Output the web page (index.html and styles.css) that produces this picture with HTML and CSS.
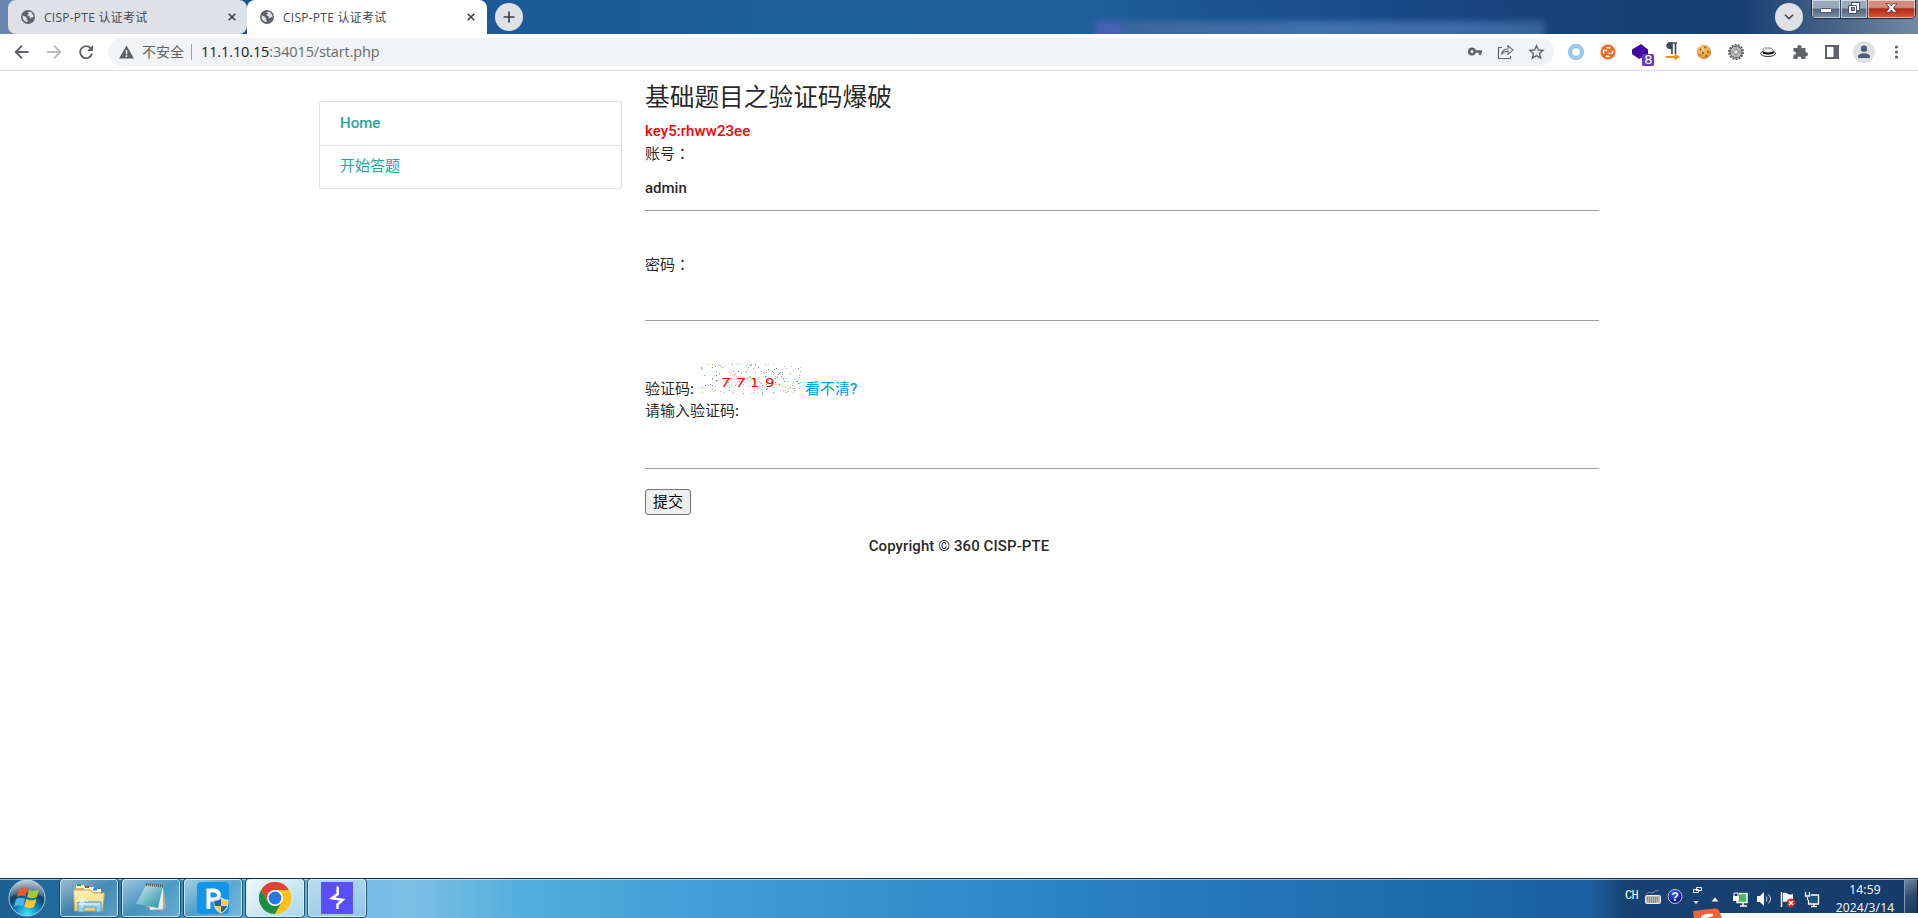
FILE: index.html
```
<!DOCTYPE html>
<html lang="zh-CN">
<head>
<meta charset="utf-8">
<title>CISP-PTE 认证考试</title>
<link rel="stylesheet" href="styles.css">
</head>
<body>
<svg width="0" height="0" class="defs">
  <defs>
    <symbol id="globe" viewBox="0 0 14 14"><circle cx="7" cy="7" r="7" fill="#5f6368"/><path d="M1.6 5.5 4 6.2 6 8l-.4 1.4 1 .8V12C3.600 12 1.600 9.500 1.600 7zM6 2l4-.2 2.300 3.400.2 2.600-1.500-.8-1.500 1.600-1-.6.4-1.500-2.400-1 .4-1.600 1.500-.3z" fill="#dee1e6"/></symbol>
    <symbol id="close" viewBox="0 0 8 8"><path d="M.7.7l6.600 6.600M7.300.7.700 7.300" stroke="#3c4043" stroke-width="1.600" fill="none"/></symbol>
    <radialGradient id="orb" cx=".5" cy=".95" r=".9"><stop offset="0" stop-color="#3fe6ff"/><stop offset=".35" stop-color="#128bc4"/><stop offset=".65" stop-color="#0d3f69"/><stop offset="1" stop-color="#7895aa"/></radialGradient>
    <linearGradient id="shine" x2="0" y2="1"><stop offset="0" stop-color="#fff" stop-opacity=".75"/><stop offset="1" stop-color="#fff" stop-opacity=".15"/></linearGradient>
    <linearGradient id="folder" x2="0" y2="1"><stop offset="0" stop-color="#fff3b8"/><stop offset="1" stop-color="#e8cc72"/></linearGradient>
    <linearGradient id="note" x2="1" y2="1"><stop offset="0" stop-color="#d7eff2"/><stop offset=".55" stop-color="#6db9c7"/><stop offset="1" stop-color="#2b8ba3"/></linearGradient>
    <radialGradient id="cookie" cx=".4" cy=".3" r=".7"><stop offset="0" stop-color="#fbcd7c"/><stop offset="1" stop-color="#dc8f30"/></radialGradient>
    <radialGradient id="help" cx=".4" cy=".3" r=".7"><stop offset="0" stop-color="#3b5cf0"/><stop offset="1" stop-color="#040a80"/></radialGradient>
  </defs>
</svg>

<header class="tabstrip">
  <div class="ghost"></div>
  <div class="tab">
    <svg class="fav"><use href="#globe"/></svg><span>CISP-PTE 认证考试</span><svg class="x"><use href="#close"/></svg>
  </div>
  <div class="tab active">
    <svg class="fav"><use href="#globe"/></svg><span>CISP-PTE 认证考试</span><svg class="x"><use href="#close"/></svg>
  </div>
  <div class="round"><svg width="12" height="12"><path d="M6 .5v11M.5 6h11" stroke="#3c4043" stroke-width="1.700"/></svg></div>
  <div class="round search"><svg width="10" height="6"><path d="M1 .7 5 4.700 9 .7" stroke="#3c4043" stroke-width="1.600" fill="none"/></svg></div>
  <div class="winctl">
    <div class="wmin"><svg width="12" height="6"><rect x=".5" y=".5" width="11" height="4" rx="1" fill="#fff" stroke="#4a5a70"/></svg></div>
    <div class="wmax"><svg width="12" height="12"><path d="M3.500.5h8v8h-3v3h-8v-8h3z" fill="#fff" stroke="#4a5168"/><path d="M3.500 5.500h3v3h-3z" fill="#8a98ac" stroke="#4a5168"/><path d="M3.500 3.500h5v5" fill="none" stroke="#4a5168"/></svg></div>
    <div class="wclose"><svg width="13" height="10"><path d="M1 .7h3.500L6.500 3 8.500.7H12L8.500 5 12 9.300H8.500L6.500 7l-2 2.300H1L4.500 5z" fill="#fff" stroke="#5a3a45" stroke-width=".9"/></svg></div>
  </div>
</header>

<div class="toolbar">
  <svg class="nav" width="108" height="36" fill="none" stroke="#5f6368" stroke-width="1.900">
    <path d="M28.500 18H16M22 11.700 15.700 18l6.300 6.300"/>
    <path d="M47 18h12.500M54 11.700l6.300 6.300-6.300 6.300" stroke="#babcbe"/>
    <path d="M90.700 14.200A6 6 0 1 0 92 19.500"/><path d="M93 11v6h-6z" fill="#5f6368" stroke="none"/>
  </svg>
  <div class="omnibox">
    <svg class="warn" width="15" height="14"><path d="M7.500.5 15 13.500H0z" fill="#5f6368"/><path d="M7.500 5v4.200M7.500 10.300v1.700" stroke="#f1f3f4" stroke-width="1.500"/></svg>
    <span class="insecure">不安全</span><i class="sep"></i>
    <span class="url"><b>11.1.10.15</b>:34015/start.php</span>
    <svg class="obicons" width="94" height="28" fill="none" stroke="#5f6368">
      <circle cx="3.900" cy="13.500" r="2.700" stroke-width="2.400"/><path d="M7 13.500H14M12 14v3" stroke-width="2.400"/>
      <path d="M34 9.500H30.500v11h12V18" stroke-width="1.200"/><path d="M33.500 16.500c.5-3.500 3-5.500 6.500-5.500V7.700L45 12l-5 4.300v-3c-3 0-5 1-6.500 3.200z" stroke-width="1.100"/>
      <path d="M68.500 7.700l1.900 4.300 4.600.4-3.500 3.100 1.100 4.600-4.100-2.500-4.100 2.500 1.100-4.600-3.500-3.100 4.600-.4z" stroke-width="1.400"/>
    </svg>
  </div>
  <svg class="exts" width="364" height="36">
    <circle cx="22" cy="18" r="6" fill="#fff" stroke="#98caef" stroke-width="4.400"/>
    <circle cx="54" cy="18" r="7.600" fill="#f36c21"/><circle cx="54" cy="18" r="4.500" fill="none" stroke="#fff" stroke-width="1.600" stroke-dasharray="4.070 3" stroke-dashoffset="2"/><circle cx="52.300" cy="16.500" r="1" fill="#fff"/><circle cx="55.500" cy="19.500" r="1" fill="#fff"/>
    <path d="M78 15.500 87 10l7 5.500v5L85 25l-7-5z" fill="#4706a8"/><path d="M78 17l8 5 8-5" stroke="#32107a" fill="none"/>
    <rect x="88" y="20" width="12" height="12" rx="1.500" fill="#673ab7"/><text x="90.200" y="30.300" class="badge">8</text>
    <path d="M114 9h9M118 9v11M121.500 9v11" stroke="#3c4a57" stroke-width="1.700" fill="none"/><path d="M118 8.200c-8-.5-7.500 7.500 0 7z" fill="#3c4a57"/><path d="M112 23h9" stroke="#f58c0c" stroke-width="2"/><path d="M120.500 19.500 126 23l-5.500 3.500z" fill="#f58c0c"/>
    <circle cx="150" cy="18" r="7.200" fill="url(#cookie)"/><g fill="#8a5114"><circle cx="146.500" cy="15.500" r=".9"/><circle cx="151" cy="13.500" r=".9"/><circle cx="154" cy="18" r=".9"/><circle cx="149" cy="19" r="1"/><circle cx="152" cy="22" r=".9"/><circle cx="146" cy="21" r=".7"/></g>
    <circle cx="182" cy="18" r="7" fill="#ccc" stroke="#666" stroke-width="2" stroke-dasharray="2 1.140"/><circle cx="182" cy="18" r="5.800" fill="#c0c0c0" stroke="#666"/><circle cx="182" cy="18" r="2.300" fill="#f3f3f3" stroke="#777"/><path d="M182 13v2.500M182 20.500v2.500M177 18h2.500M184.500 18h2.500" stroke="#888"/>
    <ellipse cx="214" cy="19.500" rx="7.500" ry="3" fill="#fff" stroke="#333"/><path d="M209 19c-.5-6 2-5 4-5s7-1 6.500 5z" fill="#eee" stroke="#444" stroke-width=".7"/><path d="M209 17.500c3 1.500 7 1.500 10.500 0v2c-3 1.500-8 1.500-10.500 0z" fill="#111"/>
    <path d="M239.500 14h4c-.8-4 4.800-4 4 0h4v4.200c3.300-.5 3.300 4.300 0 4V25h-4.200c.2-3.200-4-3.200-3.800 0h-4v-4c3.400 0 3.200-3.800 0-3.500z" fill="#5f6368"/>
    <path d="M272 12h12v12h-12z" fill="none" stroke="#5f6368" stroke-width="2"/><path d="M279.500 11h5v14h-5z" fill="#5f6368"/>
    <circle cx="310" cy="18" r="11" fill="#dee1e6"/><circle cx="310" cy="14.800" r="3.200" fill="#505d78"/><path d="M304 24v-1.500c0-4.500 12-4.500 12 0V24z" fill="#505d78"/>
    <g fill="#5f6368"><circle cx="342.500" cy="13" r="1.600"/><circle cx="342.500" cy="18" r="1.600"/><circle cx="342.500" cy="23" r="1.600"/></g>
  </svg>
</div>

<main class="page">
  <div class="cols">
    <nav class="menu"><a class="home">Home</a><a>开始答题</a></nav>
    <section class="content">
      <h1>基础题目之验证码爆破</h1>
      <div class="key">key5:rhww23ee</div>
      <div class="label">账号<span class="colon" lang="zh-TW">：</span></div>
      <div class="field first">admin</div>
      <div class="label pw">密码<span class="colon" lang="zh-TW">：</span></div>
      <div class="field second"></div>
      <div class="captcha"><span>验证码<b>:</b></span>
        <svg id="captcha" width="102" height="31"><path d="M30 11c20 3 20 7 35 8s20 6 25 5" stroke="#fbdca4" fill="none"/><g class="digits"><text transform="translate(20 23) skewX(-8) scale(1.250 1)">7</text><text transform="translate(35 23) skewX(-8) scale(1.250 1)">7</text><text transform="translate(50 23) scale(1.150 1)">1</text><text transform="translate(65 23) scale(1.200 1)">9</text></g></svg>
        <a>看不清<b>?</b></a></div>
      <div class="label enter">请输入验证码<b>:</b></div>
      <div class="field third"></div>
      <button>提交</button>
    </section>
  </div>
  <footer>Copyright © 360 CISP-PTE</footer>
</main>

<div class="taskbar">
  <svg class="start" width="60" height="39">
    <circle cx="27" cy="19" r="18" fill="url(#orb)" stroke="#a9cfe2"/><path d="M10 18a17 17 0 0 1 34 0c-11-5-23-5-34 0z" fill="url(#shine)" opacity=".6"/>
    <g transform="translate(0 -1)"><path d="M19 11.500c3-2.500 6-2 8.500-.5L25.500 18.500c-3-1.500-6-1-9 .5z" fill="#ee5a27"/><path d="M29 11.500c3 1.800 6 2 10-.3L37 19c-3 2-7 1.500-10 0z" fill="#9ccb3c"/><path d="M16 21c3-2 6-1.500 9-.3L23 28.500c-3-1.500-6-1.500-9 .5z" fill="#50b2ec"/><path d="M26.500 21c3 1.800 6 1.700 10 0l-2.300 7.500c-3 2-7 2-10 .3z" fill="#fdc72e"/></g>
  </svg>
  <div class="task"><svg width="34" height="32"><path d="M3 4h10l2 3h14v21H3z" fill="#dcb65a"/><path d="M4 3h8v3H4z" fill="#fffbe8"/><path d="M5 2h4v2H5z" fill="#18a532"/><path d="M12 5h10v3H12z" fill="#fffbe8"/><path d="M13 4h4v2h-4z" fill="#dc3b22"/><path d="M20 7h9v3h-9z" fill="#fffbe8"/><path d="M21 6.500h4v2h-4z" fill="#1a8be0"/><path d="M1.500 8h17l3 3h11l-2 18H2.500z" fill="url(#folder)" stroke="#caa54c"/><path d="M6 30V20h23v10h-5v-5H12v5z" fill="#9dd3ed" stroke="#4ba0cc"/><path d="M7 22h21" stroke="#e8f9ff"/><path d="M10 13v12M4 19h12M6.500 15.500l7 7M13.500 15.500l-7 7" stroke="#fff" opacity=".8"/></svg></div>
  <div class="task"><svg width="34" height="32"><path d="M29 3l3 22-3 4-17-4z" fill="#b8a88e"/><path d="M12 3l17 1v23L16 28z" fill="#e7ebe8"/><path d="M12 3l17 1-5 22L2 22z" fill="url(#note)"/><path d="M12 2.500l17 1.500" stroke="#555" stroke-width="3" stroke-dasharray="1 1"/></svg></div>
  <div class="task"><svg width="32" height="32"><rect width="32" height="32" rx="4" fill="#1495e9"/><path d="M11.500 27V8.500h5.500c6.500 0 6.500 9 0 9h-5.500" fill="none" stroke="#fff" stroke-width="4"/><path d="M17 18.500c3 0 5-1 7-2.500 2 1.500 4 2.500 7 2.500 0 7-2 10-7 12.500-5-2.500-7-5.500-7-12.500z" fill="#fbd137" stroke="#d5dfe8" stroke-width="1.300"/><path d="M24 17v7h-6c-.6-1.600-.7-3-.7-5 3 0 4.700-.7 6.700-2zM24 24h6c-1 3-3 5-6 6.300z" fill="#245eb8"/></svg></div>
  <div class="task current"><svg width="32" height="32" viewBox="-16 -16 32 32"><circle r="16" fill="#fbc116"/><path d="M0-8H13.860A16 16 0 0 0-13.860-8L-6.930 4z" fill="#db4437"/><path d="M-6.930 4-13.860-8A16 16 0 0 0 0 16L6.930 4z" fill="#1e8e45"/><path d="M0-8H13.860A16 16 0 0 1 0 16L6.930 4z" fill="#fbc116"/><circle r="8" fill="#fff"/><circle r="6.400" fill="#2578e6"/></svg></div>
  <div class="task light"><svg width="32" height="32"><path d="M0 0h32v32H0z" fill="#5b4eff"/><path d="M16.700 4.500v7.500L11 16.200l10.500 1.600-5 4.700V27" fill="none" stroke="#fff" stroke-width="2.500"/></svg></div>
  <div class="tray">
    <span class="lang">CH</span>
    <svg class="icons" width="190" height="39" viewBox="0 1 190 39">
      <g transform="translate(-1641)">
        <rect x="1645.500" y="17.500" width="15" height="8" rx="1" fill="#b9b9b0" stroke="#eee"/><path d="M1647 20h12M1647 22h12M1649 24h8" stroke="#555" stroke-dasharray="1 1"/><path d="M1647 16c2-4 4 1 7-2s3 0 5-2" stroke="#999" fill="none"/>
        <circle cx="1675" cy="18.500" r="7" fill="url(#help)" stroke="#c5cbd5"/><text x="1671.600" y="23" class="q">?</text>
        <path d="M1696.500 9.500h5v3h-5zM1693.500 11.500h5v3h-5z" fill="#174e86" stroke="#fff"/><path d="M1693.500 23h5l-2.500 3z" fill="#fff"/>
        <path d="M1711.500 23.500h7l-3.500-4z" fill="#fff"/>
        <path d="M1739 15.500h8v9h-10v-3" fill="#46bb53" stroke="#fff" stroke-width="1.500"/><path d="M1740 28h7M1743 25v3" stroke="#fff" stroke-width="1.500"/><path d="M1733 18h6v5h-6z" fill="#fff"/><path d="M1734 18v-3h4v3" fill="none" stroke="#fff"/>
        <path d="M1757 18h3l4-4v14l-4-4h-3z" fill="#fff"/><path d="M1766 18.500q2 2.500 0 5M1768.500 16.500q4 4.500 0 9" stroke="#cbd7e5" fill="none"/>
        <path d="M1781.500 14v15" stroke="#fff" stroke-width="1.500"/><path d="M1783 15c5-1 4 3 10 1v8c-5 1-5-1-10 0z" fill="#fff"/><circle cx="1791" cy="25" r="4.500" fill="#d22b22"/><path d="M1789 23l4 4M1793 23l-4 4" stroke="#fff" stroke-width="1.500"/>
        <path d="M1811 17h7.500v9h-10v-4" fill="#1d4f7f" stroke="#fff" stroke-width="1.300"/><path d="M1811 28.500h6M1814 26v2M1807.500 19v3M1805.500 14v4h4v-4" stroke="#fff" fill="none" stroke-width="1.300"/>
      </g>
    </svg>
    <div class="clock"><span>14:59</span><span>2024/3/14</span></div>
    <div class="desk"></div>
  </div>
  <svg class="popup" width="225" height="10"><path d="M26 5h199v5H20z" fill="#fbfcff"/><path d="M0 3.500Q0 3 3 2.500L22 .5q3-.3 4 2l3 7.500H1z" fill="#ef6434"/><path d="M8 10c0-4 8-5 12-4v2l-7 2z" fill="#fff"/></svg>
</div>
<script src="captcha.js"></script>
</body>
</html>
```
FILE: styles.css
```
* { box-sizing: border-box; }
body { margin: 0; width: 1918px; height: 918px; overflow: hidden; display: flex; flex-direction: column; background: #fff; font: 15px/22px Roboto, "Noto Sans CJK SC", sans-serif; color: rgba(0,0,0,.87); }
svg { display: block; flex: none; }
.defs { position: absolute; }

.tabstrip { height: 34px; flex: none; position: relative; display: flex; overflow: hidden; padding-left: 8px;
  background: linear-gradient(90deg, #6c87b3 0, #6c87b3 8px, #1b4f94 240px, #1d5a98 500px, #1f629c 1050px, #1a5290 1250px, #17447d 1480px, #173f72 1740px, #456185 1830px, #7389a3 1918px); }
.ghost { position: absolute; left: 1095px; top: 21px; width: 450px; height: 20px; background: linear-gradient(90deg, #4c62b4 6px, #5560c0 20px, #42699f 28px, #4878b0 220px, #4674ac 350px, #3a679f); filter: blur(3px); border-radius: 4px; opacity: .85; }
.tab { width: 239px; height: 34px; display: flex; align-items: center; padding: 0 11px 0 13px; background: #dee1e6; border-radius: 8px; font: 12px/16px "Open Sans", "Noto Sans CJK SC", sans-serif; color: #45494d; position: relative; }
.tab.active { width: 240px; background: #fff; border-radius: 8px 8px 0 0; padding-right: 12px; }
.tab span { margin: 1px 0 0 9px; flex: 1; white-space: nowrap; letter-spacing: .25px; }
.fav { width: 14px; height: 14px; }
.x { width: 8px; height: 8px; }
.round { width: 28px; height: 28px; margin: 3px 0 0 8px; border-radius: 50%; background: #dee1e6; display: flex; align-items: center; justify-content: center; position: relative; }
.round.search { margin-left: auto; }
.winctl { display: flex; height: 20px; width: 105px; margin: -1px 2px 0 8px; border: 1px solid #1e2c42; border-radius: 0 0 5px 5px; overflow: hidden; position: relative; }
.winctl > div { display: flex; align-items: center; justify-content: center; border-right: 1px solid #34445c; box-shadow: inset 0 0 0 1px rgba(255,255,255,.55); background: linear-gradient(#9aaabd 45%, #52657f 50%, #7d90aa); }
.winctl .wmin { width: 29px; padding-top: 4px; }
.winctl .wmax { width: 27px; padding-bottom: 2px; }
.winctl .wclose { flex: 1; border: 0; padding-bottom: 2px; background: linear-gradient(#d28d80 40%, #b02a16 50%, #d9583a); }

.toolbar { height: 37px; flex: none; display: flex; border-bottom: 1px solid #dadce0; }
.omnibox { width: 1446px; height: 28px; margin-top: 4px; border-radius: 14px; background: #f1f3f4; display: flex; align-items: center; padding: 0 0 0 11px; }
.insecure { margin: -2px 0 0 8px; font: 14px/20px "Noto Sans CJK SC", sans-serif; color: #5f6368; width: 42px; white-space: nowrap; }
.sep { width: 1px; height: 16px; background: #9aa0a6; margin: 0 9px 0 7px; }
.url { font: 14.500px/20px "Open Sans", sans-serif; color: #676b70; letter-spacing: -.12px; }
.url b { font-weight: 400; color: #202124; }
.obicons { margin-left: auto; margin-right: -8px; overflow: visible; }
.badge { font: 13px "DejaVu Sans", sans-serif; fill: #fff; }

.page { flex: 1; padding: 0 319px; }
.cols { display: flex; gap: 23px; }
.menu { width: 303px; height: 88px; margin-top: 30px; border: 1px solid #e0e0e0; border-radius: 2px; color: #26a69a; }
.menu a { display: block; height: 42px; padding: 9px 20px; line-height: 23px; }
.menu .home { height: 44px; padding-top: 10px; border-bottom: 1px solid #e0e0e0; font-weight: 500; }
.content { width: 954px; }
h1 { margin: 9px 0 0; font-size: 24.700px; line-height: 36px; font-weight: 400; }
.key { margin-top: 4px; font-weight: 500; color: #f00; letter-spacing: .06px; }
.label { height: 23px; line-height: 21px; }
.label b, .captcha b { font-weight: 500; }
.colon { font-family: "Noto Sans CJK TC", sans-serif; }
.field { height: 46px; border-bottom: 1px solid #9e9e9e; font-weight: 500; line-height: 46px; }
.pw { margin-top: 42px; }
.second { height: 45px; }
.captcha { display: flex; height: 31px; margin-top: 43px; }
.captcha span, .captcha a { line-height: 23px; margin-top: 14px; white-space: nowrap; }
.captcha span { width: 55px; }
.captcha a { margin-left: 3px; color: #039be5; }
.digits { font: 12.500px "DejaVu Sans", sans-serif; fill: #f00; }
.enter { margin-top: 5px; line-height: 23px; }
button { display: block; width: 46px; height: 26px; margin-top: 20px; padding: 0; border: 1px solid #767676; border-radius: 3px; background: #efefef; font: 15px/22px Roboto, "Noto Sans CJK SC", sans-serif; color: #000; }
footer { margin-top: 20px; text-align: center; font-weight: 500; letter-spacing: .09px; }

.taskbar { height: 40px; flex: none; position: relative; display: flex; gap: 4px; border-top: 1px solid #173349; box-shadow: inset 0 1px rgba(255,255,255,.55); background: linear-gradient(90deg, #1c5e8d 0, #216c9d 60px, #2b83b5 130px, #3e9acb 220px, #6eb6df 320px, #7cc0e6 410px, #54aedb 520px, #46a3d8 650px, #358fcd 900px, #2579bb 1200px, #1d69ab 1450px, #1a5f9f 1590px, #174272 1625px, #153b69 1918px); }
.start { margin-right: -4px; }
.task { width: 58px; height: 38px; border: 1px solid rgba(220,240,250,.85); outline: 1px solid rgba(16,52,78,.75); border-radius: 3px; background: linear-gradient(145deg, rgba(255,255,255,.55), rgba(255,255,255,.12) 50%, rgba(255,255,255,.25)); display: flex; align-items: center; justify-content: center; }
.task.current { background: linear-gradient(145deg, #f1f8fb, #aad7ed); }
.task.light { background: linear-gradient(145deg, rgba(255,255,255,.55), rgba(255,255,255,.2)); }
.tray { margin-left: auto; display: flex; color: #fff; }
.lang { width: 16px; font: 12px/34px "Liberation Mono", monospace; letter-spacing: -.8px; }
.q { font: bold 12px "Liberation Sans", sans-serif; fill: #fff; }
.clock { width: 68px; display: flex; flex-direction: column; align-items: center; font: 12px/18px "Open Sans", sans-serif; padding-top: 2px; margin-right: 5px; }
.clock span { white-space: nowrap; letter-spacing: .2px; }
.desk { width: 14px; height: 35px; border: 1px solid #8199ae; border-right-color: #0b2037; background: linear-gradient(150deg, #7087a0, #2b4a6b 50%, #173a5e); }
.popup { position: absolute; left: 1693px; bottom: 0; }
```
FILE: captcha.js
```
// Scatter coloured noise pixels over the captcha.
(function () {
  var svg = document.getElementById('captcha');
  var colors = ['#8fb8e8', '#b58ad0', '#7fc48a', '#c98a8a', '#6f8f96', '#c9c48a', '#9a78c8', '#8ad8d8'];
  var seed = 77;
  function rnd(n) {
    seed = (seed * 16807) % 2147483647;
    return Math.floor(seed / 2147483647 * n);
  }
  for (var i = 0; i < 170; i++) {
    var r = document.createElementNS('http://www.w3.org/2000/svg', 'rect');
    r.setAttribute('x', 1 + rnd(100));
    r.setAttribute('y', rnd(30));
    r.setAttribute('width', 1);
    r.setAttribute('height', 1);
    r.setAttribute('fill', colors[rnd(8)]);
    svg.insertBefore(r, svg.firstChild);
  }
})();
```
